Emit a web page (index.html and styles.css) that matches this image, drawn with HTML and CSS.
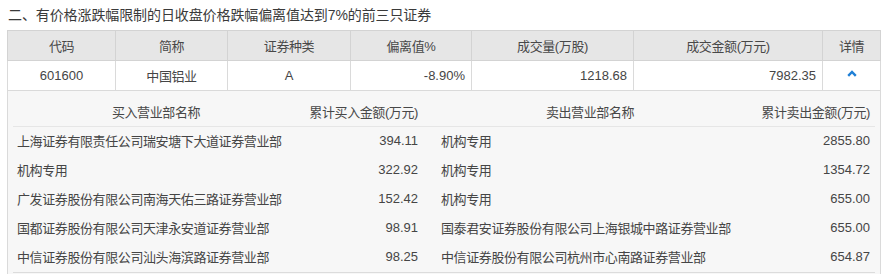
FILE: index.html
```html
<!DOCTYPE html>
<html lang="zh-CN">
<head>
<meta charset="utf-8">
<link rel="stylesheet" href="styles.css">
</head>
<body>
<div class="page">
  <h2 class="title">二、有价格涨跌幅限制的日收盘价格跌幅偏离值达到7%的前三只证券</h2>
  <table class="quote">
    <colgroup>
      <col class="c1"><col class="c2"><col class="c3"><col class="c4"><col class="c5"><col class="c6"><col class="c7">
    </colgroup>
    <thead>
      <tr><th>代码</th><th>简称</th><th>证券种类</th><th>偏离值%</th><th>成交量(万股)</th><th>成交金额(万元)</th><th>详情</th></tr>
    </thead>
    <tbody>
      <tr class="main">
        <td class="center num0">601600</td>
        <td class="center">中国铝业</td>
        <td class="center">A</td>
        <td class="num">-8.90%</td>
        <td class="num">1218.68</td>
        <td class="num">7982.35</td>
        <td class="center"><svg class="chev" width="10" height="7" viewBox="0 0 10 7"><path d="M1.2 5.8 L5 2 L8.8 5.8" fill="none" stroke="#1f7fd6" stroke-width="2.4"/></svg></td>
      </tr>
      <tr class="detail">
        <td colspan="7">
          <table class="inner">
            <colgroup><col class="d1"><col class="d2"><col class="d3"><col class="d4"></colgroup>
            <thead>
              <tr><th class="h-name">买入营业部名称</th><th class="h-amt">累计买入金额(万元)</th><th class="h-name">卖出营业部名称</th><th class="h-amt">累计卖出金额(万元)</th></tr>
            </thead>
            <tbody>
              <tr><td class="name">上海证券有限责任公司瑞安塘下大道证券营业部</td><td class="amt">394.11</td><td class="name sell">机构专用</td><td class="amt">2855.80</td></tr>
              <tr><td class="name">机构专用</td><td class="amt">322.92</td><td class="name sell">机构专用</td><td class="amt">1354.72</td></tr>
              <tr><td class="name">广发证券股份有限公司南海天佑三路证券营业部</td><td class="amt">152.42</td><td class="name sell">机构专用</td><td class="amt">655.00</td></tr>
              <tr><td class="name">国都证券股份有限公司天津永安道证券营业部</td><td class="amt">98.91</td><td class="name sell">国泰君安证券股份有限公司上海银城中路证券营业部</td><td class="amt">655.00</td></tr>
              <tr><td class="name">中信证券股份有限公司汕头海滨路证券营业部</td><td class="amt">98.25</td><td class="name sell">中信证券股份有限公司杭州市心南路证券营业部</td><td class="amt">654.87</td></tr>
            </tbody>
          </table>
        </td>
      </tr>
    </tbody>
  </table>
</div>
</body>
</html>
```
FILE: styles.css
```css
* { box-sizing: border-box; }
html, body { margin: 0; padding: 0; background: #fff; }
body {
  font-family: "Liberation Sans", "Noto Sans CJK SC", sans-serif;
  color: #454545;
  font-size: 13px;
  letter-spacing: -0.4px;
}
.page { padding: 6px 0 0 7px; }
.title {
  margin: 0 0 0 1px;
  font-size: 14px;
  font-weight: normal;
  line-height: 18px;
  height: 24px;
  color: #3a3a3a;
  letter-spacing: -0.1px;
}
.quote {
  border-collapse: collapse;
  table-layout: fixed;
  width: 873px;
}
.c1 { width: 108px; } .c2 { width: 112px; } .c3 { width: 123px; } .c4 { width: 121px; }
.c5 { width: 162px; } .c6 { width: 189px; } .c7 { width: 58px; }
.quote > thead > tr > th {
  background: #e6e6e6;
  border: 1px solid #d3d3d3;
  font-weight: normal;
  height: 30px;
  padding: 0;
  text-align: center;
  color: #484848;
}
.quote > tbody > tr.main > td {
  border: 1px solid #dadada;
  height: 30px;
  padding: 0 6px;
}
.center { text-align: center; }
.num, .num0, .amt { letter-spacing: 0; }
.num { text-align: right; }
.chev { display: block; margin: 0 auto; position: relative; top: -2px; }
.detail > td {
  background: #f7f7f7;
  border: 1px solid #dadada;
  border-bottom: none;
  padding: 6px 5px 1px 5px;
}
.inner {
  border-collapse: collapse;
  table-layout: fixed;
  width: 862px;
}
.d1 { width: 286px; } .d2 { width: 124px; } .d3 { width: 334px; } .d4 { width: 118px; }
.inner th {
  font-weight: normal;
  height: 29px;
  padding: 0 5px;
  border-bottom: 1px solid #e6e6e6;
  color: #484848;
  white-space: nowrap;
}
.inner th.h-name { text-align: center; }
.inner th.h-amt { text-align: right; padding-left: 0; }
.inner tbody tr:last-child td { border-bottom: 1px solid #dcdcdc; height: 30px; }
.inner td {
  height: 29px;
  padding: 0 5px 0 4px;
  white-space: nowrap;
}
.inner td.sell { padding-left: 18px; }
.inner td.amt { text-align: right; padding-right: 5px; }
```
